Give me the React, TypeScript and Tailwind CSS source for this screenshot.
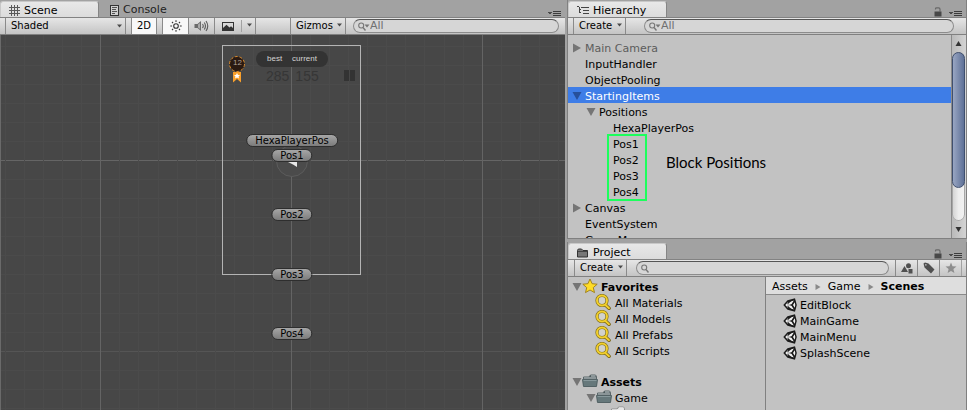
import React from "react";

function Caret({ className = "" }: { className?: string }) {
  return (
    <svg className={className} width="5" height="4" viewBox="0 0 5 4" aria-hidden="true">
      <path d="M0 0.5h5L2.5 3.5z" fill="#4a4a4a" />
    </svg>
  );
}

function Fold({ open, selected }: { open: boolean; selected?: boolean }) {
  return (
    <svg width="10" height="10" viewBox="0 0 10 10" className="mb-0.5 shrink-0" aria-hidden="true">
      <path d={open ? "M0.5 1h9L5 9z" : "M1 0.5v9L9 5z"} fill={selected ? "#27509b" : "#757575"} />
    </svg>
  );
}

function PaneMenu() {
  return (
    <button aria-label="Pane options" className="block">
      <svg width="13" height="7" viewBox="0 0 13 7" aria-hidden="true" shapeRendering="crispEdges">
        <path d="M0 2h4v1H3v1H1V3H0z" fill="#4a4a4a" />
        <path d="M5 1h8v1H5zM5 3h8v1H5zM5 5h8v1H5z" fill="#3c3c3c" />
      </svg>
    </button>
  );
}

function Lock() {
  return (
    <button aria-label="Lock pane" className="block">
      <svg width="8" height="10" viewBox="0 0 8 10" aria-hidden="true">
        <path d="M1.5 2.5V1.8Q1.5 0.8 2.7 0.8H4.6Q6 0.8 6 2.2V4.5" fill="none" stroke="#686868" strokeWidth="1.2" />
        <rect x="0.5" y="4.5" width="7" height="5" fill="#484848" />
      </svg>
    </button>
  );
}

function Tab({ icon, label, active, className = "" }: { icon: React.ReactNode; label: string; active?: boolean; className?: string }) {
  return (
    <button
      role="tab"
      aria-selected={!!active}
      className={
        "flex h-[16px] items-center gap-1 pt-0.5 text-[11px] leading-[14px] " +
        (active
          ? "rounded-t-[3px] border-x border-t border-[#c8c8c8] border-r-[#858585] bg-linear-to-b from-[#e8e8e8] to-[#dcdcdc] text-black "
          : "text-[#222] ") +
        className
      }
    >
      {icon}
      <span>{label}</span>
    </button>
  );
}

function Header({ children, lock }: { children: React.ReactNode; lock?: boolean }) {
  return (
    <div className="flex h-[18px] shrink-0 items-end justify-between border-b border-[#828282]">
      <div role="tablist" className="flex">{children}</div>
      <div className="flex h-[16px] items-end gap-[7px] pr-1">
        {lock && <Lock />}
        <PaneMenu />
      </div>
    </div>
  );
}

function Toolbar({ children }: { children: React.ReactNode }) {
  return (
    <div className="flex h-[17px] shrink-0 border-b border-[#808080] bg-linear-to-b from-[#e6e6e6] to-[#c4c4c4] text-[10px] leading-[16px] text-black">
      {children}
    </div>
  );
}

function Search({ hint }: { hint?: string }) {
  return (
    <label className="mt-px flex h-[14px] min-w-0 flex-1 items-center rounded-full border border-[#8c8c8c] border-t-[#555] bg-[#d6d6d6] pl-1">
      <svg width="12" height="9" viewBox="0 0 12 9" className="shrink-0" aria-hidden="true">
        <circle cx="3.2" cy="3.5" r="2.5" fill="none" stroke="#777" strokeWidth="1.1" />
        <path d="M5 5.5l2.5 3" stroke="#777" strokeWidth="1.4" />
        {hint && <path d="M6.5 2.5h5L9 5.5z" fill="#777" />}
      </svg>
      <input
        type="text"
        aria-label="Search"
        placeholder={hint}
        className="h-[12px] w-full min-w-0 bg-transparent text-[11px] leading-[12px] outline-none placeholder:text-[#707070]"
      />
    </label>
  );
}

function GridLines() {
  const step = 19.07;
  const at = (origin: number, i: number) => Math.round(origin + i * step);
  const cols = Array.from({ length: 130 }, (_, k) => k - 15);
  const rows = Array.from({ length: 90 }, (_, k) => k - 6);
  return (
    <svg className="absolute inset-0 h-full w-full" aria-hidden="true" shapeRendering="crispEdges">
      {rows.map((i) => (
        <rect key={i} x="0" y={at(125, i)} width="100%" height="1" fill={i === 0 ? "#656565" : i % 10 === 0 ? "#555" : "#4b4b4b"} />
      ))}
      {cols.map((i) => (
        <rect key={i} x={at(290, i)} y="0" width="1" height="100%" fill={i % 10 === 0 ? "#646464" : "#4b4b4b"} />
      ))}
    </svg>
  );
}

function Marker({ label, className }: { label: string; className: string }) {
  return (
    <div className={"absolute flex h-[13px] -translate-x-1/2 items-center rounded-full border border-[#2e2e2e] bg-linear-to-b from-[#a6a6a6] to-[#7c7c7c] px-2 text-[10px] leading-[11px] whitespace-nowrap text-black " + className}>
      {label}
    </div>
  );
}

function ScenePane() {
  return (
    <section className="flex min-w-0 flex-col">
      <Header>
        <Tab
          active
          label="Scene"
          className="w-[99px] pl-2"
          icon={
            <svg width="11" height="11" viewBox="0 0 11 11" aria-hidden="true" shapeRendering="crispEdges">
              <path d="M2 0h1v11H2zM5 0h1v11H5zM8 0h1v11H8zM0 2h11v1H0zM0 5h11v1H0zM0 8h11v1H0z" fill="#5a5a5a" />
            </svg>
          }
        />
        <Tab
          label="Console"
          className="pl-[11px]"
          icon={
            <svg width="9" height="11" viewBox="0 0 9 11" aria-hidden="true" shapeRendering="crispEdges">
              <rect x="0.5" y="0.5" width="8" height="10" fill="#d0d0d0" stroke="#333" />
              <path d="M2 2h5v1H2zM2 4h4v1H2zM2 6h5v1H2zM2 8h3v1H2z" fill="#555" />
            </svg>
          }
        />
      </Header>
      <Toolbar>
        <div className="relative ml-[5px] flex w-[121px] border-x border-[#8a8a8a]">
          <select aria-label="Draw mode" className="w-full appearance-none pl-[5px] outline-none">
            <option>Shaded</option>
          </select>
          <Caret className="pointer-events-none absolute top-1.5 right-[3px]" />
        </div>
        <button aria-pressed="true" className="ml-[5px] w-[26px] border-x border-[#8a8a8a] bg-[#f8f8f8] text-center">2D</button>
        <button aria-pressed="true" aria-label="Scene lighting" className="ml-[5px] flex w-[27px] items-center justify-center border-x border-[#8a8a8a] bg-[#f8f8f8]">
          <svg width="12" height="12" viewBox="0 0 12 12" aria-hidden="true">
            <circle cx="6" cy="6" r="2.3" fill="none" stroke="#333" strokeWidth="1.1" />
            <path d="M6 0.3v1.8M6 9.9v1.8M0.3 6h1.8M9.9 6h1.8M2 2l1.1 1.1M8.9 8.9L10 10M2 10l1.1-1.1M8.9 3.1L10 2" stroke="#333" strokeWidth="1.1" />
          </svg>
        </button>
        <button aria-label="Scene audio" className="flex w-[26px] items-center justify-center border-r border-[#8a8a8a]">
          <svg width="15" height="12" viewBox="0 0 15 12" aria-hidden="true">
            <path d="M0.5 4h3L7 1v10L3.500 8h-3z" fill="#6a6a6a" />
            <path d="M4 4.500L6 3v6L4 7.500z" fill="#aaa" />
            <path d="M8.500 4Q10 6 8.500 8M10.300 2.500Q12.600 6 10.300 9.500M12 1Q15.500 6 12 11" fill="none" stroke="#5a5a5a" strokeWidth="1.100" />
          </svg>
        </button>
        <button aria-label="Effects" className="flex w-[26px] items-center justify-center">
          <svg width="12" height="9" viewBox="0 0 12 9" aria-hidden="true">
            <rect width="12" height="9" fill="#333" />
            <path d="M1 1h10v5L9 4.200 7.500 5.500 4.500 2.800 1 6z" fill="#d8d8d8" />
          </svg>
        </button>
        <button aria-label="Effects menu" className="my-0.5 flex w-[11px] items-center justify-end border-l border-[#a2a2a2] pb-0.5">
          <Caret />
        </button>
        <div className="w-1 border-r border-[#8a8a8a]" />
        <div className="flex-1" />
        <button className="flex w-[56px] items-center justify-between border-x border-[#8a8a8a] pr-[3px] pl-[5px]">
          Gizmos
          <Caret className="mb-0.5 shrink-0" />
        </button>
        <div className="flex w-[219px] pr-1.5 pl-[7px]">
          <Search hint="All" />
        </div>
      </Toolbar>
      <div className="relative min-h-0 flex-1 overflow-hidden border-l border-[#6a6a6a] bg-[#474747]">
        <GridLines />
        <div className="absolute top-[10px] left-[221px] h-[230px] w-[139px] border border-[#b4b4b4]" />
        <svg className="absolute top-[20px] left-[227px]" width="18" height="28" viewBox="0 0 18 28" aria-hidden="true">
          <circle cx="9" cy="9" r="7.500" fill="#2a1a12" stroke="#d88a2c" strokeWidth="1" strokeDasharray="3 1.700" />
          <path d="M5 17h8v10.500L9 24l-4 3.500z" fill="#f9a02c" />
          <path d="M9 18l1 2h2l-1.500 1.500.5 2L9 22.500 7 23.500l.5-2L6 20h2z" fill="#fff" />
        </svg>
        <span className="absolute top-[24px] left-[232px] font-['Liberation_Sans',sans-serif] text-[8px] leading-[8px] text-[#b0a098]">12</span>
        <div className="absolute top-[16px] left-[255px] flex h-[16px] w-[72px] items-center justify-around rounded-full bg-[#333] px-1.5 font-['Liberation_Sans',sans-serif] text-[8px] text-[#d4d4d4]">
          <span>best</span>
          <span>current</span>
        </div>
        <div className="absolute top-[33px] left-[265px] flex gap-1.5 font-['Liberation_Sans',sans-serif] text-[14px] leading-[16px] text-[#363636]">
          <span>285</span>
          <span>155</span>
        </div>
        <div className="absolute top-[35px] left-[343px] flex h-[11px] gap-px">
          <div className="w-[5px] bg-[#333]" />
          <div className="w-[5px] bg-[#333]" />
        </div>
        <svg className="absolute top-[109px] left-[274px]" width="34" height="34" viewBox="0 0 34 34" aria-hidden="true">
          <circle cx="17" cy="17" r="15.500" fill="#4b4b4b" stroke="#5c5c5c" />
          <path d="M11 17h11v6l-4-2.500z" fill="#e8e8e8" />
        </svg>
        <Marker label="HexaPlayerPos" className="top-[99px] left-[291px]" />
        <Marker label="Pos1" className="top-[114px] left-[291px]" />
        <Marker label="Pos2" className="top-[173px] left-[291px]" />
        <Marker label="Pos3" className="top-[233px] left-[291px]" />
        <Marker label="Pos4" className="top-[292px] left-[291px]" />
      </div>
    </section>
  );
}

function CreateButton() {
  return (
    <button className="ml-[5px] flex w-[53px] items-center justify-between border-x border-[#8a8a8a] pr-[3px] pl-[5px]">
      Create
      <Caret className="mb-0.5 shrink-0" />
    </button>
  );
}

function TreeRow({ label, indent = "pl-[17px]" }: { label: string; indent?: string }) {
  return <div className={"flex h-[16px] items-end whitespace-nowrap " + indent}>{label}</div>;
}

function ParentRow({ label, open, selected, className = "pl-1" }: { label: string; open: boolean; selected?: boolean; className?: string }) {
  return (
    <div className={"flex h-[16px] items-end gap-[3px] whitespace-nowrap " + className}>
      <Fold open={open} selected={selected} />
      {label}
    </div>
  );
}

function Scrollbar() {
  return (
    <div className="flex w-[15px] shrink-0 flex-col border-l border-[#8a8a8a] bg-linear-to-r from-[#bababa] to-[#d4d4d4] pr-px" aria-hidden="true">
      <svg width="13" height="17" viewBox="0 0 13 17"><path d="M3.500 11L6.500 6l3 5z" fill="#333" /></svg>
      <div className="flex min-h-0 flex-1 flex-col rounded-full bg-linear-to-r from-[#d0d0d0] via-[#ededed] to-[#f2f2f2] shadow-[inset_0_0_0_1px_#a6a6a6]">
        <div className="h-4/5 rounded-full border border-[#40506f] bg-linear-to-r from-[#99a6c2] to-[#5f7197]" />
      </div>
      <svg width="13" height="17" viewBox="0 0 13 17"><path d="M3.500 6L6.500 11l3-5z" fill="#333" /></svg>
    </div>
  );
}

function HierarchyPane() {
  return (
    <section className="flex min-h-0 flex-[239] flex-col border-x border-b border-[#808080]">
      <Header lock>
        <Tab
          active
          label="Hierarchy"
          className="w-[99px] pl-2"
          icon={
            <svg width="12" height="9" viewBox="0 0 12 9" aria-hidden="true" shapeRendering="crispEdges">
              <path d="M0 0h2v1H0zM4 1h8v1H4zM2 3h2v1H2zM6 4h6v1H6zM2 6h2v1H2zM6 7h6v1H6zM2 1h1v6H2z" fill="#444" />
            </svg>
          }
        />
      </Header>
      <Toolbar>
        <CreateButton />
        <div className="flex min-w-0 flex-1 pr-3 pl-[18px]">
          <Search hint="All" />
        </div>
      </Toolbar>
      <div className="flex min-h-0 flex-1 bg-[#c2c2c2]">
        <div className="min-w-0 flex-1 overflow-hidden pt-1 text-[11px] leading-[12px] text-black">
          <ParentRow label="Main Camera" open={false} className="pl-1 text-[#5c5c5c]" />
          <TreeRow label="InputHandler" />
          <TreeRow label="ObjectPooling" />
          <ParentRow label="StartingItems" open selected className="bg-[#3e7de7] pl-1 text-white" />
          <ParentRow label="Positions" open className="pl-[18px]" />
          <TreeRow label="HexaPlayerPos" indent="pl-[45px]" />
          <div className="relative">
            <TreeRow label="Pos1" indent="pl-[45px]" />
            <TreeRow label="Pos2" indent="pl-[45px]" />
            <TreeRow label="Pos3" indent="pl-[45px]" />
            <TreeRow label="Pos4" indent="pl-[45px]" />
            <div className="absolute -top-px left-[39px] h-[67px] w-[40px] border-2 border-[#1cff5c]" />
            <span className="absolute top-[17px] left-[98px] font-['Lato',sans-serif] text-[15px] leading-[20px] whitespace-nowrap">Block Positions</span>
          </div>
          <ParentRow label="Canvas" open={false} />
          <TreeRow label="EventSystem" />
          <TreeRow label="GameManager" />
        </div>
        <Scrollbar />
      </div>
    </section>
  );
}

function Magnifier() {
  return (
    <svg width="16" height="16" viewBox="0 0 16 16" className="shrink-0" aria-hidden="true">
      <path d="M10 10.500l4 3.800" stroke="#7a6410" strokeWidth="3.600" strokeLinecap="round" />
      <circle cx="7" cy="6.500" r="5" fill="#d2d2cc" stroke="#80701c" strokeWidth="3.200" />
      <circle cx="7" cy="6.500" r="5" fill="none" stroke="#f2cf2c" strokeWidth="1.900" />
      <path d="M10.500 11l3.500 3.200" stroke="#f2cf2c" strokeWidth="2" strokeLinecap="round" />
    </svg>
  );
}

function Folder({ pale }: { pale?: boolean }) {
  return (
    <svg width="16" height="16" viewBox="0 0 16 16" className="shrink-0" aria-hidden="true">
      <path d="M1.500 12.500V4H7L8.500 2H13.500L14.500 3.500V12.500z" fill={pale ? "#dadada" : "#4c595c"} stroke={pale ? "#909090" : "#5a6669"} />
      <path d="M9 3h4.500M2 5h12" stroke={pale ? "#f2f2f2" : "#c9d2d3"} />
      <path d="M0.500 6.500h15L14.500 13.500h-13z" fill={pale ? "#c8c8c8" : "#66787b"} stroke={pale ? "#909090" : "#536265"} />
      <path d="M1.500 7.500h13" stroke={pale ? "#eee" : "#87989b"} />
    </svg>
  );
}

function UnityIcon() {
  return (
    <svg width="14" height="14" viewBox="0 0 14 14" className="shrink-0" aria-hidden="true">
      <path d="M0.300 7L4.500 2.300 12 0.300 13.800 7 12 13.700 4.500 11.700z" fill="#1a1a1a" />
      <path d="M5 5.800L8.500 3.300 10.800 2.600 8.500 6.200zM5 8.200L8.500 10.700 10.800 11.400 8.500 7.800zM10 7L11.700 4.200 12.300 7 11.700 9.800zM2.300 6.900L5.300 3.800 4.200 6.200H7.500V7.800H4.200L5.300 10.200z" fill="#f2f2f2" />
    </svg>
  );
}

function Crumb() {
  return (
    <svg width="6" height="6" viewBox="0 0 6 6" aria-hidden="true"><path d="M0.500 0v6l5-3z" fill="#8a8a8a" /></svg>
  );
}

function FavoriteRow({ label }: { label: string }) {
  return (
    <div className="flex h-[16px] items-end gap-1 pl-[27px] whitespace-nowrap">
      <Magnifier />
      {label}
    </div>
  );
}

function FolderRow({ label, className, open = true, bold }: { label: string; className: string; open?: boolean; bold?: boolean }) {
  return (
    <div className={"flex h-[16px] items-end whitespace-nowrap " + className}>
      {open && <Fold open />}
      <span className="w-[17px] shrink-0"><Folder pale={!open} /></span>
      <span className={bold ? "pl-0.5 font-bold" : "pl-0.5"}>{label}</span>
    </div>
  );
}

function ProjectPane() {
  const scenes = ["EditBlock", "MainGame", "MainMenu", "SplashScene"];
  return (
    <section className="flex min-h-0 flex-[168] flex-col border-x border-[#808080]">
      <Header lock>
        <Tab
          active
          label="Project"
          className="w-[99px] pl-2"
          icon={
            <svg width="12" height="10" viewBox="0 0 12 10" aria-hidden="true">
              <path d="M0.500 9V2.500Q0.500 1 2 1H4.500L6 2.500H10.500V9z" fill="#777" stroke="#333" />
              <path d="M1 3.500h9.500" stroke="#444" />
            </svg>
          }
        />
      </Header>
      <Toolbar>
        <div className="ml-px flex"><CreateButton /></div>
        <div className="flex min-w-0 flex-1 pr-1.5 pl-[9px]">
          <Search />
        </div>
        <button aria-label="Filter by type" className="flex w-[22px] items-center justify-center border-l border-[#8a8a8a]">
          <svg width="12" height="11" viewBox="0 0 12 11" aria-hidden="true">
            <circle cx="7.500" cy="2.800" r="2.500" fill="#505050" />
            <path d="M0 9l3.500-6L7 9zM7.500 6h4v4.500h-4z" fill="#505050" />
          </svg>
        </button>
        <button aria-label="Filter by label" className="flex w-[22px] items-center justify-center border-l border-[#8a8a8a]">
          <svg width="12" height="12" viewBox="0 0 12 12" aria-hidden="true">
            <path fillRule="evenodd" d="M0.500 1.500L2 0.500 5.500 1.500 11.500 7.500 8 11.500 1.500 5.500zM2.200 2.200v1.300h1.300V2.200z" fill="#505050" />
          </svg>
        </button>
        <button aria-label="Save search" className="flex w-[22px] items-center justify-center border-l border-[#8a8a8a]">
          <svg width="12" height="12" viewBox="0 0 12 12" aria-hidden="true">
            <path d="M6 0.500l1.500 3.800 4 .2-3.100 2.600 1 4L6 8.900l-3.400 2.200 1-4L.5 4.500l4-.2z" fill="#8e8e8e" />
          </svg>
        </button>
        <div className="w-[5px] border-l border-[#a2a2a2]" />
      </Toolbar>
      <div className="flex min-h-0 flex-1 bg-[#c2c2c2] text-[11px] leading-[12px] text-black">
        <div className="w-[197px] shrink-0 overflow-hidden pt-px">
          <div className="flex h-[16px] items-end pl-1 font-bold">
            <Fold open />
            <svg width="16" height="16" viewBox="0 0 16 16" className="mr-[3px] shrink-0" aria-hidden="true">
              <path d="M8 1l2.100 4.700 5.100.5-3.900 3.400 1.200 5L8 12l-4.500 2.600 1.200-5L.8 6.200l5.100-.5z" fill="#ffdc28" stroke="#9b7c14" strokeWidth="0.900" />
            </svg>
            Favorites
          </div>
          <FavoriteRow label="All Materials" />
          <FavoriteRow label="All Models" />
          <FavoriteRow label="All Prefabs" />
          <FavoriteRow label="All Scripts" />
          <FolderRow label="Assets" className="mt-[15px] pl-1" bold />
          <FolderRow label="Game" className="pl-[18px]" />
          <FolderRow label="Animations" className="pl-[42px]" open={false} />
        </div>
        <div className="min-w-0 flex-1 overflow-hidden border-l border-[#808080]">
          <nav aria-label="Folder path" className="flex h-[18px] items-center gap-[7px] border-b border-[#8a8a8a] bg-[#dedede] pt-[3px] pl-1.5">
            <a href="#assets">Assets</a>
            <Crumb />
            <a href="#game">Game</a>
            <Crumb />
            <a href="#scenes" className="font-bold">Scenes</a>
          </nav>
          <ul className="pt-px">
            {scenes.map((name) => (
              <li key={name} className="flex h-[16px] items-end gap-[3px] pl-[17px]">
                <UnityIcon />
                {name}
              </li>
            ))}
          </ul>
        </div>
      </div>
    </section>
  );
}

export default function App() {
  return (
    <main className="grid h-screen grid-cols-[minmax(0,565fr)_minmax(0,400fr)] gap-0.5 overflow-hidden bg-[#a2a2a2] font-['DejaVu_Sans',sans-serif]">
      <ScenePane />
      <div className="flex min-h-0 min-w-0 flex-col gap-[3px]">
        <HierarchyPane />
        <ProjectPane />
      </div>
    </main>
  );
}
